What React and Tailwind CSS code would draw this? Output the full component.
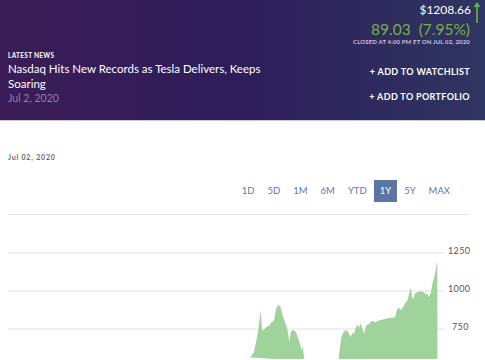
import React from "react";

const top = [
  [245, 358], [247, 357.7], [250, 359], [254, 353], [256, 343], [258, 333], [260.7, 311.7], [262, 330], [263, 331.7],
  [266.7, 327.7], [269, 326.7], [271.7, 323], [274, 321.7], [276, 310], [278.3, 305.7], [280.7, 308.3], [282.7, 316.7],
  [285, 323], [287.3, 330], [289.3, 343], [291, 332.3], [293.3, 331], [296, 333.3], [298.3, 340], [300, 345],
  [301.7, 351.7], [302.7, 347.7], [304, 358.3], [305, 362],
];
const top2 = [
  [338.3, 362], [340, 348], [341.7, 336.7], [344, 332.3], [346.7, 331], [349, 335], [350.7, 337.7], [352.7, 333.3],
  [354, 335], [356, 328.3], [357.3, 325.7], [359.3, 328.3], [360.7, 324.3], [362.7, 331], [364, 335], [366, 326.7],
  [369.3, 325], [371.7, 321.7], [375, 323.3], [378.3, 321.7], [381.7, 320.7], [385, 320], [388.3, 319], [391.7, 319],
  [395, 318.3], [396.7, 311.7], [398.3, 308.3], [400.7, 311], [402.7, 309], [405, 304.3], [407.3, 301.7], [409.3, 294.3],
  [410.7, 288.3], [412, 297.7], [413.3, 300], [415, 294.3], [417.3, 293.3], [420.7, 292.3], [424, 293.3], [426, 295.7],
  [427.3, 294.3], [428.7, 298.3], [430.7, 294.3], [432.7, 283.3], [435, 275], [436.7, 265], [437.3, 262], [437.5, 362],
];
const toPath = (pts) => "M" + pts.map(([x, y]) => `${x},${y}`).join(" L") + " Z";

const ranges = ["1D", "5D", "1M", "6M", "YTD", "1Y", "5Y", "MAX"];

export default function App() {
  return (
    <div className="w-[485px] h-[360px] overflow-hidden bg-white" style={{ fontFamily: "Lato, 'Open Sans', sans-serif" }}>
      <header className="h-[121px] flex justify-between bg-gradient-to-r from-[#3b1c56] via-[#2d1d5a] to-[#2f3561] border-b border-[#cfc8dc]">
        <div className="pl-2 pt-[51px] flex flex-col">
          <div className="text-[6.5px] font-bold tracking-[0.3px] text-white leading-[9px]">LATEST NEWS</div>
          <div className="mt-[1px] w-[268px] text-[11.5px] leading-[15px] text-white">
            Nasdaq Hits New Records as Tesla Delivers, Keeps Soaring
          </div>
          <div className="text-[10.5px] leading-[14px] text-[#8c81a8]">Jul 2, 2020</div>
        </div>
        <div className="flex flex-col items-end pr-[15px]">
          <div className="flex items-start -mr-[11px]">
            <span className="text-[12px] leading-[17px] text-white mt-[1px]">$1208.66</span>
            <svg width="8" height="24" viewBox="0 0 8 24" className="ml-[2px]">
              <path d="M4 2 L7.5 7 L4.8 7 L4.8 23 L3.2 23 L3.2 7 L0.5 7 Z" fill="#5cb845" />
            </svg>
          </div>
          <div className="-mt-[5px] text-[15.5px] leading-[20px] text-[#79b044] whitespace-pre">89.03  (7.95%)</div>
          <div className="-mt-[1px] text-[6px] font-bold leading-[8px] text-[#c9c3d8] tracking-[0.15px]">CLOSED AT 4:00 PM ET ON JUL 02, 2020</div>
          <div className="mt-[20px] text-[9px] font-bold leading-[12px] text-white tracking-[0.35px]">+ ADD TO WATCHLIST</div>
          <div className="mt-[13px] text-[9px] font-bold leading-[12px] text-white tracking-[0.35px]">+ ADD TO PORTFOLIO</div>
        </div>
      </header>
      <div className="px-2 pt-[31px]">
        <div className="text-[7px] font-bold tracking-[0.8px] text-[#666] leading-[10px]">Jul 02, 2020</div>
        <div className="mt-[18px] flex justify-end pr-[21px] gap-[1px]">
          {ranges.map((r) => (
            <div
              key={r}
              className={
                r === "1Y"
                  ? "h-[22px] px-[6px] flex items-center text-[9.5px] bg-[#5a76a5] text-white"
                  : "h-[22px] px-[6px] flex items-center text-[9.5px] text-[#5b7aaa]"
              }
            >
              {r}
            </div>
          ))}
        </div>
        <div className="mt-[12px] mr-[7px] h-px bg-[#e6e6e6]" />
      </div>
      <svg width="485" height="144" viewBox="0 216 485 144" className="block">
        {[254, 292, 330].map((y) => (
          <line key={y} x1="8" x2="444" y1={y} y2={y} stroke="#ebebeb" strokeWidth="1.5" />
        ))}
        <path d={toPath(top)} fill="#a0d29c" />
        <path d={toPath(top2)} fill="#a0d29c" />
        <g fontFamily="Lato, sans-serif" fontSize="9" fill="#555" letterSpacing="0.4">
          <text x="448" y="255">1250</text>
          <text x="448" y="293">1000</text>
          <text x="452" y="331">750</text>
        </g>
      </svg>
    </div>
  );
}
